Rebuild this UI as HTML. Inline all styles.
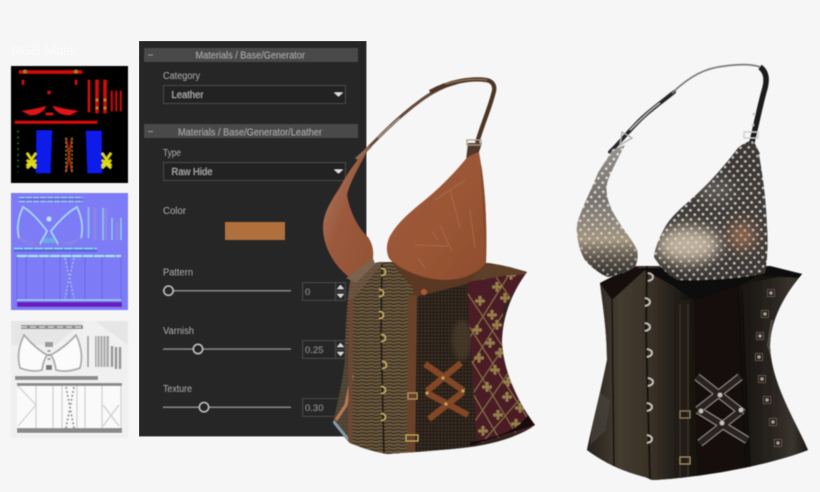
<!DOCTYPE html>
<html><head><meta charset="utf-8"><style>
html,body{margin:0;padding:0;background:#f6f6f6}
svg{display:block}
text{font-family:"Liberation Sans",sans-serif}
</style></head><body>
<svg width="820" height="492" viewBox="0 0 820 492" xmlns="http://www.w3.org/2000/svg">
<defs>
<filter id="b3" x="-5%" y="-5%" width="110%" height="110%"><feGaussianBlur stdDeviation="0.45"/></filter>
<filter id="b6" x="-5%" y="-5%" width="110%" height="110%"><feGaussianBlur stdDeviation="0.5"/></filter>
<filter id="b2" x="-10%" y="-10%" width="120%" height="120%"><feGaussianBlur stdDeviation="2.5"/></filter>
<filter id="b8" x="-50%" y="-50%" width="200%" height="200%"><feGaussianBlur stdDeviation="7"/></filter>
<pattern id="scale" width="9" height="3.4" patternUnits="userSpaceOnUse"><rect width="9" height="3.4" fill="#6d5c40"/><path d="M0 1.3 Q2.25 .4 4.5 1.3 T9 1.3" fill="none" stroke="#2c2319" stroke-width="1.300"/></pattern>
<pattern id="mesh" width="3.4" height="3.4" patternUnits="userSpaceOnUse"><rect width="3.4" height="3.4" fill="#2b211a"/><path d="M0 1.2H3.4" stroke="#413428" stroke-width="1.100"/><path d="M1.700 0V3.400" stroke="#1d160f" stroke-width=".7"/></pattern>
<pattern id="dots" width="8.2" height="9.2" patternUnits="userSpaceOnUse" patternTransform="rotate(-3)"><rect width="8.2" height="9.2" fill="#3e3a37"/><circle cx="2" cy="2.300" r="1.250" fill="#e2dfda"/><circle cx="6.100" cy="6.900" r="1.250" fill="#e2dfda"/></pattern>
<linearGradient id="cupL" x1="0" y1="0" x2="0" y2="1"><stop offset="0" stop-color="#f0eeea" stop-opacity=".5"/><stop offset=".4" stop-color="#dcd8d2" stop-opacity=".35"/><stop offset=".72" stop-color="#d9c7a9" stop-opacity=".65"/><stop offset="1" stop-color="#1d1a18" stop-opacity=".35"/></linearGradient>
<linearGradient id="cupR" x1="0" y1="0" x2="0" y2="1"><stop offset="0" stop-color="#2a2725" stop-opacity=".2"/><stop offset=".6" stop-color="#55504c" stop-opacity=".1"/><stop offset="1" stop-color="#2a2622" stop-opacity=".25"/></linearGradient>
<linearGradient id="lc" x1="0" y1="0" x2="1" y2="1"><stop offset="0" stop-color="#b08068"/><stop offset=".45" stop-color="#9c5a3e"/><stop offset="1" stop-color="#925233"/></linearGradient>
<linearGradient id="rc" x1="0" y1="0" x2="1" y2="1"><stop offset="0" stop-color="#9e5c3c"/><stop offset=".55" stop-color="#9a5636"/><stop offset="1" stop-color="#8f4d2e"/></linearGradient>
<linearGradient id="blk1" x1="0" y1="0" x2="1" y2="0"><stop offset="0" stop-color="#25211c"/><stop offset=".35" stop-color="#443b30"/><stop offset=".7" stop-color="#372f26"/><stop offset="1" stop-color="#1b1713"/></linearGradient>
<linearGradient id="blk3" x1="0" y1="0" x2="1" y2="0"><stop offset="0" stop-color="#171411"/><stop offset=".5" stop-color="#2b2621"/><stop offset=".75" stop-color="#3a342e"/><stop offset="1" stop-color="#181512"/></linearGradient>
<clipPath id="lb"><path d="M353 268C347 290 345 330 345 360C342 385 337 405 333 423C340 432 345 438 350 443C362 448 372 451 382 453L387 454C415 452 445 450 470 447C495 444 520 436 535 425C520 405 504 375 502 343C502 320 510 295 527 272C510 267 498 264 487 263L380 262Z"/></clipPath>
<clipPath id="bb"><path d="M600 283C602 300 607 330 607 360C600 395 592 425 587 450C610 467 630 473 645 477L652 480C700 478 770 465 808 450C795 420 772 385 770 347C770 325 780 300 802 274L770 266L633 266Z"/></clipPath>
<clipPath id="burg"><path d="M467 280L527 270L503 310L502 343L523 407L535 427L477 444Z"/></clipPath>
<clipPath id="silvR"><path d="M752 140C745 143 741 145 738 148C725 165 712 180 698 193C685 205 672 215 665 227C659 238 655 248 654 257C662 270 670 276 678 280C710 281 745 278 765 273C768 255 768 240 767 227C766 200 763 175 758 150Z"/></clipPath>
<clipPath id="rcupc"><path d="M479 152C474 154 468 156 465 160C450 178 437 190 425 200C410 212 398 222 390 236C386 244 386 252 389 258C398 270 425 280 445 280C465 280 480 272 486 263C487 230 486 200 482 170Z"/></clipPath>
<g id="fl"><g fill="#97804c"><circle cx="0" cy="-3.400" r="1.700"/><circle cx="-3.200" cy="0" r="1.700"/><circle cx="3.200" cy="0" r="1.700"/><circle cx="0" cy="3.200" r="1.500"/><circle cx="0" cy="0" r="2"/></g></g>
<g id="hk"><path d="M-2 -3.500Q2.500 -3.500 2.500 0Q2.500 3.500 -2 3.500" fill="none" stroke="#c8b06c" stroke-width="1.400"/></g>
<g id="hs"><path d="M-2 -4Q3 -3 3 0Q3 3 -2 4" fill="none" stroke="#cfc9c0" stroke-width="1.600"/></g>
<g id="st"><rect x="-3.500" y="-3.500" width="7" height="7" fill="#171412" stroke="#6f6458" stroke-width=".7"/><circle r="1.700" fill="#a99a87"/></g>
</defs>

<rect width="820" height="492" fill="#f6f6f6"/>
<text x="11" y="55" font-size="13.500" fill="#fbfbfb" textLength="66" lengthAdjust="spacingAndGlyphs">RGB Mask</text>

<!-- thumbnail 1 -->
<g filter="url(#b3)">
<rect x="11" y="66" width="117" height="117" fill="#000"/>
<rect x="19" y="70.500" width="63" height="3" fill="#d01010"/>
<circle cx="25" cy="71.500" r="1.800" fill="#9a8a20"/><circle cx="76" cy="71.500" r="1.800" fill="#9a8a20"/>
<rect x="22" y="80" width="2" height="4.500" fill="#d01010"/><rect x="75" y="80" width="2" height="4.500" fill="#d01010"/>
<circle cx="49" cy="92.500" r="1.600" fill="#d01010"/>
<path d="M22 111Q38 109 46 106Q42 115 30 115Z M78 111Q62 109 53 106Q57 115 70 115Z M46 113H53V115H46Z" fill="#e01414"/>
<rect x="88" y="80" width="2" height="32" fill="#d01010"/>
<rect x="95.500" y="80" width="3" height="33" fill="#d01010"/><rect x="103.500" y="80" width="3" height="33" fill="#d01010"/>
<rect x="111" y="91" width="1.600" height="20" fill="#c01010"/><rect x="115.500" y="91" width="1.600" height="20" fill="#c01010"/><rect x="120" y="91" width="1.600" height="20" fill="#c01010"/>
<circle cx="97" cy="100" r="1.300" fill="#aa9a20"/><circle cx="105" cy="100" r="1.300" fill="#aa9a20"/><circle cx="97" cy="108" r="1.300" fill="#aa9a20"/><circle cx="105" cy="108" r="1.300" fill="#aa9a20"/>
<rect x="15" y="121" width="82" height="2.500" fill="#d01010"/>
<path d="M36.500 130.500H52L50.500 173H36Z M86 131H101.500L102 173H87.500Z" fill="#0b1fe8"/>
<path d="M27 153L36 166M36 153L27 166M27 160L36 168M36 160L27 168M102 153L111 166M111 153L102 166M102 160L111 168M111 160L102 168" stroke="#e2dc14" stroke-width="2.400"/>
<path d="M18 131v41" stroke="#1f8a1f" stroke-width="1.300" stroke-dasharray="1.300 4.500"/>
<path d="M66 138L72 172M72 138L66 172" stroke="#a02a18" stroke-width="1.800"/>
<path d="M66 138v34M72 138v34" stroke="#7e8a20" stroke-width="1" stroke-dasharray="1.500 2.500"/>
</g>

<!-- thumbnail 2 -->
<g filter="url(#b3)">
<rect x="11" y="193" width="117" height="117" fill="#7d7bf6"/>
<rect x="19" y="197" width="64" height="5" fill="#6f6ae0"/>
<path d="M19 197.500H83M19 201.500H83" stroke="#9fdcf0" stroke-width="1" stroke-dasharray="6 1"/>
<path d="M23 207C17 220 17 230 19 238C26 243 33 245 40 244C43 238 46 234 47 231C40 222 32 212 23 207Z" fill="none" stroke="#a8d8ee" stroke-width="1.600"/>
<path d="M19 238C26 243 33 245 40 244" fill="none" stroke="#8a3cc8" stroke-width="1"/>
<path d="M77 207C83 220 83 230 81 238C74 243 66 245 58 244C55 238 52 234 51 231C58 222 68 212 77 207Z" fill="none" stroke="#a8d8ee" stroke-width="1.600"/>
<path d="M81 238C74 243 66 245 58 244" fill="none" stroke="#8a3cc8" stroke-width="1"/>
<circle cx="49" cy="219" r="2.500" fill="#b9e4f0"/>
<rect x="43" y="238" width="12" height="5" fill="#62c0dc" opacity=".7"/>
<path d="M88.500 207V238M95 208V240M103 208V240M106 208V240M112 218V240M117 222V240M121 218V240" stroke="#8ec8e8" stroke-width="1.500"/>
<path d="M95 208V240M106 208V240M117 222V240" stroke="#a850c8" stroke-width=".8"/>
<rect x="14" y="248" width="83" height="4" fill="#5a6ae0"/>
<path d="M14 248.500H97" stroke="#9cf0e0" stroke-width="1" stroke-dasharray="9 1"/>
<path d="M17 256H121" stroke="#a8e4f0" stroke-width="2" stroke-dasharray="10 1"/>
<path d="M17 257V300M26 257V300M44 257V300M60 257V300M69 257V300M85 257V300M102 257V300M121 257V300" stroke="#6a64e0" stroke-width="1"/>
<path d="M65 258L74 298M74 258L65 298" stroke="#a8c0f4" stroke-width="1.300" stroke-dasharray="2 2"/>
<path d="M17 300H121" stroke="#a8e4f0" stroke-width="1"/>
<rect x="17" y="302" width="105" height="5" fill="#6a1cc0"/>
</g>

<!-- thumbnail 3 -->
<g filter="url(#b3)">
<rect x="11" y="321" width="117" height="117" fill="#f0f0f0"/>
<path d="M11 321H85L55 345H11Z M95 321L128 321V345Z" fill="#e6e6e6"/>
<path d="M21 327H83" stroke="#8a8a88" stroke-width="4"/><path d="M21 327H83" stroke="#dcdcdc" stroke-width="1.300" stroke-dasharray="6 3"/>
<path d="M24 335C17 350 18 360 20 368C28 371 35 372 42 370C43 362 45 358 47 355C38 350 30 342 24 335Z" fill="#fbfbfb" stroke="#aaa" stroke-width="1.800"/>
<path d="M76 335C83 350 82 360 80 368C72 371 63 372 56 370C55 362 53 358 51 355C60 350 70 342 76 335Z" fill="#fbfbfb" stroke="#aaa" stroke-width="1.800"/>
<rect x="45" y="342" width="8" height="5" fill="#999"/><rect x="46" y="365" width="6" height="5" fill="#777"/>
<path d="M49 350V362" stroke="#999" stroke-width="3" stroke-dasharray="2 2"/>
<path d="M88 336V367" stroke="#8f8f8f" stroke-width="1.500"/>
<path d="M95 336H109V367H95Z" fill="#9a9a9a" opacity=".8"/><path d="M97 336V368M100 336V368M103 336V368M106 336V368" stroke="#eee" stroke-width=".8"/>
<path d="M112 346V367M116 347V369M120 347V369" stroke="#949494" stroke-width="2.500"/>
<rect x="15" y="376" width="83" height="4" fill="#8c8c8a"/>
<rect x="17" y="384" width="105" height="50" fill="#fafafa"/>
<rect x="17" y="383" width="105" height="3" fill="#8a8a88"/>
<rect x="17" y="428" width="105" height="5" fill="#8a8a88"/>
<path d="M18 386L36 405L18 426M36 386V428M53 386V428M62 386V428M77 386V428M85 386V428M102 386V428M121 386V428" fill="none" stroke="#cfcfcf" stroke-width="1.200"/>
<path d="M66 387L74 428M74 387L66 428" stroke="#9b9b9b" stroke-width="2" stroke-dasharray="2 2"/>
<path d="M103 405L119 426M119 405L103 426" stroke="#d4d4d4" stroke-width="1.500"/>
</g>

<!-- panel -->
<rect x="139.500" y="41.500" width="226.500" height="394.500" fill="#262626" stroke="#3e3e3e"/>
<g filter="url(#b3)">
<rect x="144" y="48" width="214" height="14" fill="#484848"/>
<rect x="144" y="124" width="214" height="14" fill="#484848"/>
<rect x="148" y="54.500" width="5" height="1" fill="#8a8a8a"/>
<rect x="148" y="131" width="5" height="1" fill="#8a8a8a"/>
<text x="195.500" y="58.500" font-size="10" fill="#a8a8a8" textLength="109.500" lengthAdjust="spacingAndGlyphs">Materials / Base/Generator</text>
<text x="178" y="135.500" font-size="10" fill="#a8a8a8" textLength="144" lengthAdjust="spacingAndGlyphs">Materials / Base/Generator/Leather</text>
<text x="163" y="79" font-size="10" fill="#b0b0b0" textLength="37" lengthAdjust="spacingAndGlyphs">Category</text>
<rect x="163.500" y="85.500" width="182" height="18" fill="#242424" stroke="#484848"/>
<text x="171.500" y="98" font-size="10" fill="#b0b0b0" textLength="32" lengthAdjust="spacingAndGlyphs">Leather</text>
<path d="M334 92.500H343L338.500 96.500Z" fill="#e0e0e0"/>
<text x="163" y="156" font-size="10" fill="#b0b0b0" textLength="18" lengthAdjust="spacingAndGlyphs">Type</text>
<rect x="163.500" y="162.500" width="182" height="18" fill="#242424" stroke="#484848"/>
<text x="171.500" y="175" font-size="10" fill="#b0b0b0" textLength="41" lengthAdjust="spacingAndGlyphs">Raw Hide</text>
<path d="M334 169.500H343L338.500 173.500Z" fill="#e0e0e0"/>
<text x="163" y="214" font-size="10" fill="#b0b0b0" textLength="23" lengthAdjust="spacingAndGlyphs">Color</text>
<rect x="225" y="222" width="60" height="18" fill="#b06f3c"/>

<text x="163" y="275.500" font-size="10" fill="#b0b0b0" textLength="30" lengthAdjust="spacingAndGlyphs">Pattern</text>
<rect x="163" y="290" width="128" height="1.500" fill="#8a8a8a"/>
<circle cx="168.500" cy="290.700" r="4.800" fill="#262626" stroke="#c8c8c8" stroke-width="1.300"/>
<rect x="302.500" y="282.500" width="43" height="18" fill="#262626" stroke="#464646"/>
<path d="M335.500 282.500V300.500M336 291.500H345" stroke="#464646"/>
<text x="305" y="295" font-size="9.500" fill="#858585">0</text>
<path d="M340.500 285L344 289H337Z M340.500 298L344 294H337Z" fill="#d8d8d8"/>

<text x="163" y="334" font-size="10" fill="#b0b0b0" textLength="31" lengthAdjust="spacingAndGlyphs">Varnish</text>
<rect x="163" y="348.300" width="128" height="1.500" fill="#8a8a8a"/>
<circle cx="198" cy="349" r="4.800" fill="#262626" stroke="#c8c8c8" stroke-width="1.300"/>
<rect x="302.500" y="340.500" width="43" height="18" fill="#262626" stroke="#464646"/>
<path d="M335.500 340.500V358.500M336 349.500H345" stroke="#464646"/>
<text x="305" y="353" font-size="9.500" fill="#858585">0.25</text>
<path d="M340.500 343L344 347H337Z M340.500 356L344 352H337Z" fill="#d8d8d8"/>

<text x="163" y="392" font-size="10" fill="#b0b0b0" textLength="29" lengthAdjust="spacingAndGlyphs">Texture</text>
<rect x="163" y="406.500" width="128" height="1.500" fill="#8a8a8a"/>
<circle cx="204" cy="407.200" r="4.800" fill="#262626" stroke="#c8c8c8" stroke-width="1.300"/>
<rect x="302.500" y="398.500" width="43" height="18" fill="#262626" stroke="#464646"/>
<text x="305" y="411" font-size="9.500" fill="#858585">0.30</text>
</g>

<!-- leather corset -->
<g filter="url(#b6)">
<g clip-path="url(#lb)">
<rect x="330" y="255" width="210" height="205" fill="#2f241b"/>
<rect x="330" y="255" width="84" height="205" fill="url(#scale)"/>
<path d="M330 350L352 345L351 460H330Z" fill="#4d4437" opacity=".8"/>
<path d="M336 420L346 405L352 375" fill="none" stroke="#b57a55" stroke-width="3"/>
<path d="M333 421L350 442" stroke="#8b9aa5" stroke-width="3"/>
<rect x="414" y="270" width="64" height="190" fill="url(#mesh)"/>
<ellipse cx="462" cy="340" rx="10" ry="20" fill="#5a4836" opacity=".5" filter="url(#b2)"/>
<g clip-path="url(#burg)">
<rect x="460" y="260" width="80" height="190" fill="#4c1f25"/>
<path d="M462 285L545 410M462 315L535 430M462 345L520 440M462 375L500 440M490 268L545 350M462 440L545 320M462 410L535 300M462 380L530 270M462 350L515 265M480 445L545 370" stroke="#8e744a" stroke-width=".9" fill="none"/>
<use href="#fl" x="483" y="275"/><use href="#fl" x="497" y="287"/><use href="#fl" x="480" y="301"/><use href="#fl" x="492" y="315"/><use href="#fl" x="477" y="330"/><use href="#fl" x="490" y="343"/><use href="#fl" x="479" y="358"/><use href="#fl" x="495" y="370"/><use href="#fl" x="487" y="387"/><use href="#fl" x="507" y="397"/><use href="#fl" x="498" y="415"/><use href="#fl" x="516" y="424"/><use href="#fl" x="520" y="408"/><use href="#fl" x="508" y="382"/><use href="#fl" x="500" y="353"/><use href="#fl" x="505" y="298"/><use href="#fl" x="497" y="325"/><use href="#fl" x="511" y="275"/><use href="#fl" x="483" y="431"/>
</g>
<path d="M480 263L528 268L527 274L503 276L467 282Z" fill="#5d3f2c"/>
<path d="M470 446L535 425L528 415Q515 435 470 442Z" fill="#141110"/>
<path d="M392 262C398 272 406 280 412 286L415 297L467 284L488 262Z" fill="#5a3723"/>
<path d="M408 295H417L415 455H407Z" fill="#6b4229"/>
<path d="M349 296H353L352 445H348Z" fill="#6e4630"/>
<path d="M382 262L381 330L384 456" fill="none" stroke="#1c1713" stroke-width="1.700"/>
<path d="M345 285L378 258L384 262L354 298L345 300Z" fill="#6f5644" opacity=".75"/>
</g>
<use href="#hk" x="383" y="272"/><use href="#hk" x="381" y="293"/><use href="#hk" x="381" y="315"/><use href="#hk" x="383" y="338"/><use href="#hk" x="384" y="365"/><use href="#hk" x="383" y="390"/><use href="#hk" x="383" y="417"/>
<rect x="408" y="393" width="9" height="6" fill="none" stroke="#b89a60" stroke-width="1"/>
<rect x="406" y="435" width="12" height="6" fill="none" stroke="#c8ac60" stroke-width="1"/>
<g stroke="#844627" stroke-width="6" fill="none"><path d="M425 364L464 391"/><path d="M461 363L427 391"/><path d="M427 393L468 415"/><path d="M463 392L429 419"/></g>
<circle cx="443" cy="378" r="1.500" fill="#c8ac60"/><circle cx="463" cy="391" r="1.500" fill="#c8ac60"/><circle cx="427" cy="393" r="1.500" fill="#c8ac60"/><circle cx="446" cy="404" r="1.500" fill="#c8ac60"/>
<!-- strap -->
<path d="M358 158C366 150 372 144 380 136C392 124 405 112 420 101C432 92 444 86 456 83" fill="none" stroke="#64493a" stroke-width="3" stroke-linecap="round"/>
<path d="M378 138C385 131 392 124 400 118" fill="none" stroke="#a89a88" stroke-width="1.300"/>
<path d="M430 92C450 81 472 78 486 80C493 81 495 86 494 91C490 108 482 125 477 143" fill="none" stroke="#4d3427" stroke-width="4.300"/>
<path d="M445 84C460 80 475 78 487 80" fill="none" stroke="#9c7c5c" stroke-width="1"/>
<path d="M468 143H482L479 152L474 160L466 161Z" fill="#4e382b"/>
<rect x="467" y="140" width="14" height="5" fill="none" stroke="#a89a86" stroke-width="1.200"/>
<path d="M355 158L369 146L372 147L358 160Z" fill="#8a7060"/>
<!-- cups -->
<path d="M370 146C358 158 348 172 340 187C332 200 323 212 323 228C323 245 333 265 349 277L352 278C360 272 368 265 373 258C374 250 372 243 368 237C358 228 350 212 347 195C350 182 360 165 370 146Z" fill="url(#lc)"/>
<path d="M479 152C474 154 468 156 465 160C450 178 437 190 425 200C410 212 398 222 390 236C386 244 386 252 389 258C398 270 425 280 445 280C465 280 480 272 486 263C487 230 486 200 482 170Z" fill="url(#rc)"/>
<g clip-path="url(#rcupc)">
<path d="M465 180L435 200M450 190L460 228M440 225L452 252M415 245L448 246M432 232L438 240M418 258L425 268M470 210L475 248" stroke="#b07550" stroke-width=".9" fill="none" opacity=".7"/>
<path d="M388 258C400 272 425 281 445 281C465 281 480 272 487 263" fill="none" stroke="#80472a" stroke-width="3" opacity=".7"/>
<path d="M482 165L487 262" stroke="#7e4429" stroke-width="3" opacity=".6"/>
</g>
<path d="M346 278L373 258L375 264L356 283Z" fill="#7b6250"/>
<circle cx="424" cy="292" r="3" fill="#a85a38"/>
</g>

<!-- black corset -->
<g filter="url(#b6)">
<g clip-path="url(#bb)">
<rect x="580" y="260" width="235" height="225" fill="#161210"/>
<path d="M585 265H684V485H585Z" fill="url(#blk1)"/>
<path d="M694 295L740 285L752 485H697Z" fill="#120e0c"/>
<path d="M740 285L810 270V485H752Z" fill="url(#blk3)"/>
<path d="M612 300L614 470" stroke="#15110e" stroke-width="1.500"/>
<path d="M596 390L610 400L606 430L590 445Z" fill="#4a453f" opacity=".65"/>
<path d="M678 300H690V480H680Z" fill="#221c18"/>
<path d="M680 304V478M688 304V478" stroke="#403730" stroke-width=".9"/>
<path d="M647 266L646 330L650 480" fill="none" stroke="#0f0c0a" stroke-width="1.800"/>
<path d="M742 290L750 470M738 293L746 472" stroke="#0d0a09" stroke-width="1"/>
<path d="M772 320L768 345L786 400" fill="none" stroke="#8d867c" stroke-width="2" opacity=".4"/>
<path d="M600 283L633 266L645 270L612 300Z" fill="#15110f"/>
<path d="M640 268L672 285L694 300L740 285L775 268Z" fill="#0f0c0a"/>
<path d="M770 266L803 272L801 278L762 276Z" fill="#0f0d0d"/>
</g>
<use href="#hs" x="650" y="277"/><use href="#hs" x="647" y="302"/><use href="#hs" x="647" y="327"/><use href="#hs" x="649" y="353"/><use href="#hs" x="650" y="382"/><use href="#hs" x="649" y="407"/><use href="#hs" x="649" y="439"/>
<use href="#st" x="771" y="293"/><use href="#st" x="765" y="314"/><use href="#st" x="760" y="336"/><use href="#st" x="759" y="357"/><use href="#st" x="762" y="379"/><use href="#st" x="767" y="400"/><use href="#st" x="773" y="422"/><use href="#st" x="778" y="443"/>
<rect x="680" y="411" width="10" height="7" fill="none" stroke="#8c7c62" stroke-width="1"/>
<rect x="680" y="457" width="10" height="7" fill="none" stroke="#a08c68" stroke-width="1"/>
<g fill="none" stroke="#a8a29a" stroke-width="7.500"><path d="M697 377L743 413"/><path d="M740 377L698 410"/><path d="M698 410L747 440"/><path d="M742 410L700 443"/></g>
<g fill="none" stroke="#2b2420" stroke-width="6.200"><path d="M697 377L743 413"/><path d="M740 377L698 410"/><path d="M698 410L747 440"/><path d="M742 410L700 443"/></g>
<circle cx="720" cy="395" r="2.300" fill="#c8c4bc"/><circle cx="741" cy="410" r="2.300" fill="#c8c4bc"/><circle cx="701" cy="411" r="2.300" fill="#c8c4bc"/><circle cx="722" cy="423" r="2.300" fill="#c8c4bc"/>
<!-- strap -->
<path d="M610 152C620 142 628 132 640 120C650 110 662 102 674 92" fill="none" stroke="#27262a" stroke-width="3.800" stroke-linecap="round"/>
<path d="M630 130C640 120 650 110 660 103" fill="none" stroke="#d9d7d4" stroke-width=".9"/>
<path d="M672 93C690 76 705 68 725 66C740 64 752 64 760 67" fill="none" stroke="#7f7d7b" stroke-width="1.800"/>
<path d="M760 67C767 72 767 80 765 88C760 105 757 122 752 142" fill="none" stroke="#1a1a1c" stroke-width="5.500"/>
<path d="M622 132L632 138L620 145Z" fill="none" stroke="#aaa8a5" stroke-width="1.300"/>
<path d="M744 154L752 138L760 154Z" fill="#1a1a1b"/>
<rect x="744" y="132" width="14" height="6" fill="none" stroke="#c9c7c3" stroke-width="1.200"/>
<circle cx="754" cy="114" r="1.300" fill="#c2c0bd"/><circle cx="753" cy="125" r="1.300" fill="#c2c0bd"/>
<!-- left cup -->
<path d="M612 150C607 160 602 166 598 173C592 188 586 200 582 210C578 220 576 226 577 232C578 245 581 253 585 260C592 268 600 274 608 277C618 275 628 272 635 267C638 260 638 255 637 250C632 240 627 234 622 227C616 218 611 210 608 200C606 192 606 186 608 180C612 170 618 158 625 145Z" fill="url(#dots)"/>
<path d="M612 150C607 160 602 166 598 173C592 188 586 200 582 210C578 220 576 226 577 232C578 245 581 253 585 260C592 268 600 274 608 277C618 275 628 272 635 267C638 260 638 255 637 250C632 240 627 234 622 227C616 218 611 210 608 200C606 192 606 186 608 180C612 170 618 158 625 145Z" fill="url(#cupL)"/>
<!-- right cup -->
<g clip-path="url(#silvR)">
<rect x="650" y="135" width="125" height="150" fill="url(#dots)"/>
<rect x="650" y="135" width="125" height="150" fill="url(#cupR)"/>
<ellipse cx="688" cy="245" rx="32" ry="18" fill="#e6d7bd" opacity=".75" filter="url(#b8)"/>
<ellipse cx="742" cy="236" rx="14" ry="14" fill="#c98a62" opacity=".55" filter="url(#b8)"/>
<ellipse cx="715" cy="190" rx="18" ry="12" fill="#bdb9b4" opacity=".25" filter="url(#b8)"/>
</g>
</g>
</svg>
</body></html>
